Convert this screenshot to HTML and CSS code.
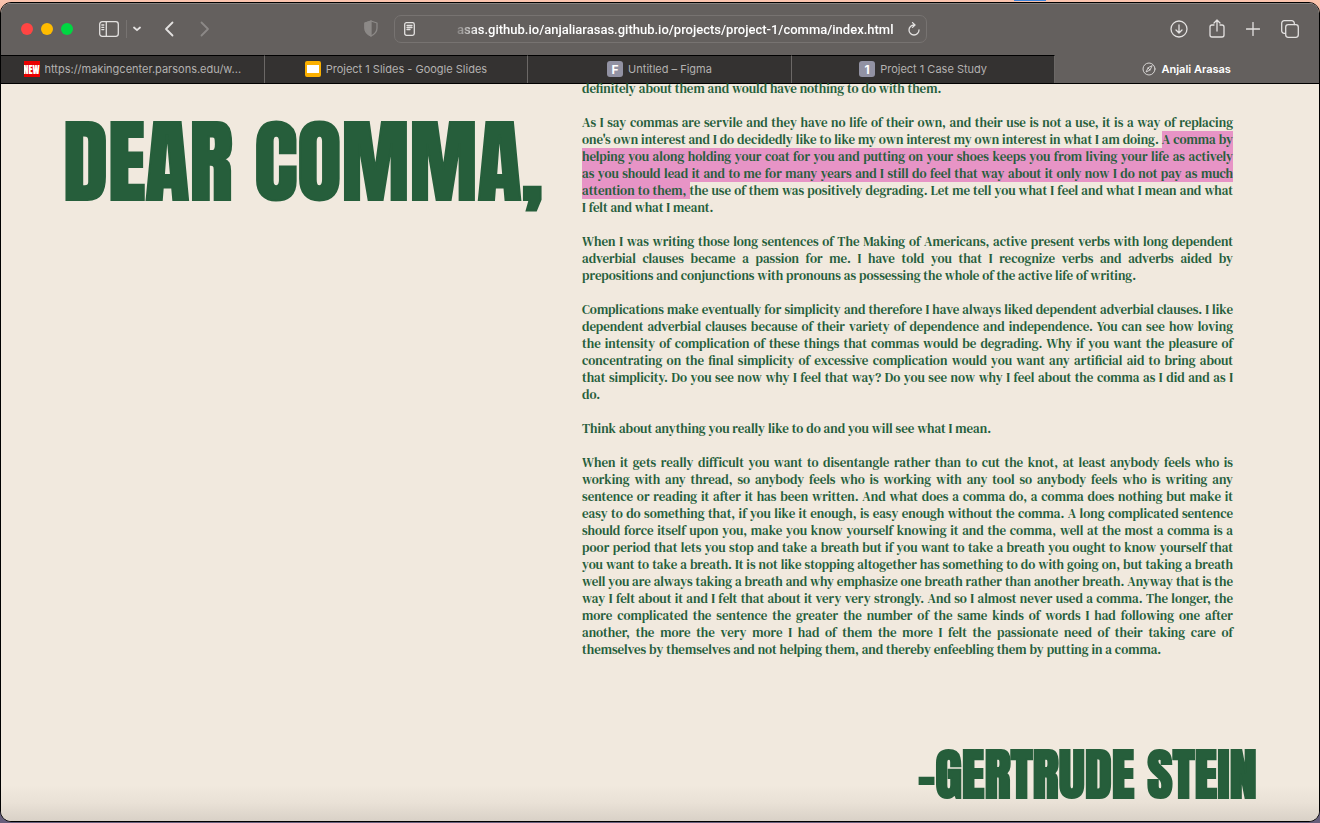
FILE: index.html
```html
<!DOCTYPE html>
<html lang="en">
<head>
<meta charset="utf-8">
<title>Anjali Arasas</title>
<link rel="stylesheet" href="styles.css">
</head>
<body>
<div class="window">
  <header class="toolbar">
    <div class="group left">
      <div class="lights"><button class="light red" aria-label="Close"></button><button class="light yellow" aria-label="Minimize"></button><button class="light green" aria-label="Full screen"></button></div>
      <button class="icon sidebar" aria-label="Sidebar"><svg width="20" height="16" viewBox="0 0 20 16"><rect x=".7" y=".7" width="18.6" height="14.6" rx="2.5"/><path d="M7.3 1v14M2.8 4h2M2.8 6.3h2M2.8 8.6h2"/></svg></button>
      <button class="icon chevron" aria-label="Tab groups"><svg width="8" height="6" viewBox="0 0 8 6"><path class="thick" d="M1 1.5l3 2.7 3-2.7"/></svg></button>
      <button class="icon back" aria-label="Back"><svg width="10" height="16" viewBox="0 0 10 16"><path class="thick" d="M8.5 1.5L2 8l6.5 6.5"/></svg></button>
      <button class="icon forward dim" aria-label="Forward" disabled><svg width="10" height="16" viewBox="0 0 10 16"><path class="thick" d="M1.5 1.5L8 8l-6.5 6.5"/></svg></button>
    </div>
    <div class="group center">
      <button class="icon shield dim" aria-label="Privacy report"><svg width="14" height="17" viewBox="0 0 14 17"><path d="M7 1l6 2v5c0 4-3 6.5-6 8-3-1.5-6-4-6-8V3z"/><path class="fill" d="M7 1L1 3v5c0 4 3 6.5 6 8z"/></svg></button>
      <div class="address">
        <button class="icon reader" aria-label="Reader"><svg width="11" height="14" viewBox="0 0 11 14"><rect x=".7" y=".7" width="9.6" height="12.6" rx="1.8"/><path d="M3 3.5h5M3 5.5h5M3 7.5h3"/></svg></button>
        <input class="url" aria-label="Address" value="asas.github.io/anjaliarasas.github.io/projects/project-1/comma/index.html">
        <button class="icon reload" aria-label="Reload"><svg width="12" height="14" viewBox="0 0 12 14"><path d="M6.5 3H6a5 5 0 1 0 5 5M4.5.6L7 3 4.5 5.4"/></svg></button>
      </div>
    </div>
    <div class="group right">
      <button class="icon" aria-label="Downloads"><svg width="18" height="18" viewBox="0 0 18 18"><circle cx="9" cy="9" r="8"/><path d="M9 5v8M6 10l3 3 3-3"/></svg></button>
      <button class="icon share" aria-label="Share"><svg width="16" height="20" viewBox="0 0 16 20"><path d="M5 6H3a2 2 0 0 0-2 2v8a2 2 0 0 0 2 2h10a2 2 0 0 0 2-2V8a2 2 0 0 0-2-2h-2M8 12V1M5 4l3-3 3 3"/></svg></button>
      <button class="icon" aria-label="New tab"><svg width="14" height="14" viewBox="0 0 14 14"><path d="M7 .5v13M.5 7h13"/></svg></button>
      <button class="icon" aria-label="Tab overview"><svg width="18" height="18" viewBox="0 0 18 18"><rect x="4.7" y="4.7" width="12.6" height="12.6" rx="2.5"/><path d="M4.5 13.3H3.2A2.5 2.5 0 0 1 .7 10.8V3.2A2.5 2.5 0 0 1 3.2.7h7.6a2.5 2.5 0 0 1 2.5 2.5v1.3"/></svg></button>
    </div>
  </header>
  <nav class="tabs">
    <a class="tab" href="#"><span class="fav new">NEW</span>https://makingcenter.parsons.edu/w...</a>
    <a class="tab" href="#"><span class="fav slides"></span>Project 1 Slides - Google Slides</a>
    <a class="tab" href="#"><span class="fav letter">F</span>Untitled – Figma</a>
    <a class="tab" href="#"><span class="fav letter">1</span>Project 1 Case Study</a>
    <a class="tab active" href="#"><svg width="14" height="14" viewBox="0 0 14 14"><circle cx="7" cy="7" r="6"/><path d="M10 4L8 8l-4 2 2-4zM6 6l2 2"/></svg>Anjali Arasas</a>
  </nav>
  <main class="page">
    <div class="columns">
      <h1 class="title">DEAR COMMA,</h1>
      <article class="essay">
        <p>definitely about them and would have nothing to do with them.</p>
        <p>As I say commas are servile and they have no life of their own, and their use is not a use, it is a way of replacing one's own interest and I do decidedly like to like my own interest my own interest in what I am doing. <mark>A comma by helping you along holding your coat for you and putting on your shoes keeps you from living your life as actively as you should lead it and to me for many years and I still do feel that way about it only now I do not pay as much attention to them, </mark>the use of them was positively degrading. Let me tell you what I feel and what I mean and what I felt and what I meant.</p>
        <p>When I was writing those long sentences of The Making of Americans, active present verbs with long dependent adverbial clauses became a passion for me. I have told you that I recognize verbs and adverbs aided by prepositions and conjunctions with pronouns as possessing the whole of the active life of writing.</p>
        <p>Complications make eventually for simplicity and therefore I have always liked dependent adverbial clauses. I like dependent adverbial clauses because of their variety of dependence and independence. You can see how loving the intensity of complication of these things that commas would be degrading. Why if you want the pleasure of concentrating on the final simplicity of excessive complication would you want any artificial aid to bring about that simplicity. Do you see now why I feel that way? Do you see now why I feel about the comma as I did and as I do.</p>
        <p>Think about anything you really like to do and you will see what I mean.</p>
        <p>When it gets really difficult you want to disentangle rather than to cut the knot, at least anybody feels who is working with any thread, so anybody feels who is working with any tool so anybody feels who is writing any sentence or reading it after it has been written. And what does a comma do, a comma does nothing but make it easy to do something that, if you like it enough, is easy enough without the comma. A long complicated sentence should force itself upon you, make you know yourself knowing it and the comma, well at the most a comma is a poor period that lets you stop and take a breath but if you want to take a breath you ought to know yourself that you want to take a breath. It is not like stopping altogether has something to do with going on, but taking a breath well you are always taking a breath and why emphasize one breath rather than another breath. Anyway that is the way I felt about it and I felt that about it very very strongly. And so I almost never used a comma. The longer, the more complicated the sentence the greater the number of the same kinds of words I had following one after another, the more the very more I had of them the more I felt the passionate need of their taking care of themselves by themselves and not helping them, and thereby enfeebling them by putting in a comma.</p>
      </article>
    </div>
    <h2 class="signature">-GERTRUDE STEIN</h2>
  </main>
</div>
</body>
</html>
```
FILE: styles.css
```css
* { box-sizing: border-box; }
body {
  margin: 0;
  height: 100vh;
  padding: 2px 0 1px;
  display: flex;
  background: linear-gradient(90deg, transparent 1014px, #3d82d8 1014px, #3d82d8 1046px, transparent 1046px) 0 0 / 100% 1px no-repeat,
    linear-gradient(#fbc4ae 0, #f6bda8 12px, #3b303f 60px, #67607c 100%);
  font-family: Inter, "Liberation Sans", sans-serif;
}
.window {
  flex: 1;
  min-width: 0;
  display: flex;
  flex-direction: column;
  border: 1px solid #000;
  border-radius: 11px;
  overflow: hidden;
  background: #f1e9de;
}
button { border: 0; padding: 0; background: none; }
svg { display: block; fill: none; stroke: currentColor; stroke-width: 1.3; stroke-linecap: round; stroke-linejoin: round; }
.thick { stroke-width: 1.8; }
.fill { fill: currentColor; }
.toolbar {
  height: 52px;
  flex: none;
  display: grid;
  grid-template-columns: 1fr auto 1fr;
  align-items: center;
  padding: 0 20px 2px;
  background: #64605e;
  border-top: 1px solid #85817f;
}
.group { display: flex; align-items: center; }
.lights { display: flex; gap: 8px; margin-right: 26px; }
.light { width: 12px; height: 12px; border-radius: 50%; }
.red { background: #ff4543; }
.yellow { background: #ffbc00; }
.green { background: #00d742; }
.icon { color: #e3e1e0; }
.dim { color: #8c8987; }
.chevron { border-left: 1px solid #777371; margin-left: 7px; padding: 6px 0 6px 6px; }
.back { margin-left: 23px; }
.forward { margin-left: 26px; }
.center { margin-right: 30px; }
.shield { margin-right: 16px; }
.address {
  width: 533px;
  height: 28px;
  display: flex;
  align-items: center;
  padding: 0 6px 0 9px;
  border: 1px solid #777371;
  border-radius: 7px;
}
.reader { margin-right: 36px; }
.url {
  flex: 1;
  min-width: 0;
  height: 24px;
  border: 0;
  background: none;
  padding: 2px 14px 0 0;
  color: #fff;
  font: 500 13px Roboto, Inter, "Liberation Sans", sans-serif;
  text-align: right;
  -webkit-mask-image: linear-gradient(90deg, transparent, #000 28px);
  mask-image: linear-gradient(90deg, transparent, #000 28px);
}
.right { justify-content: flex-end; gap: 21px; }
.tabs {
  height: 29px;
  flex: none;
  display: grid;
  grid-template-columns: repeat(5, 1fr);
  border-bottom: 1px solid #000;
  background: #343231;
}
.tab {
  display: flex;
  align-items: center;
  justify-content: center;
  gap: 5px;
  padding-bottom: 1px;
  border-top: 1px solid #000;
  border-right: 1px solid #6b6866;
  color: #b3b1b0;
  font-size: 11px;
  text-decoration: none;
  white-space: nowrap;
}
.active { background: #64605e; border-color: #64605e; color: #fff; font-weight: 600; }
.active svg { stroke-width: 1; color: #d5d3d2; }
.fav { width: 16px; height: 16px; display: flex; align-items: center; justify-content: center; overflow: hidden; flex: none; }
.new { background: #e80000; color: #fff; font: 10px Anton, "Liberation Sans", sans-serif; }
.slides { border: solid #fbb000; border-width: 4px 2px; border-radius: 2px; background: #fff; }
.letter { border-radius: 3px; background: #9292a3; color: #fff; font-weight: 700; font-size: 12px; }
.page {
  flex: 1;
  min-height: 0;
  display: flex;
  flex-direction: column;
  justify-content: space-between;
  color: #265e3b;
  background: linear-gradient(#f1e9de calc(100% - 36px), #e9e1d6 calc(100% - 18px), #d9d1c7 100%);
}
.columns {
  display: grid;
  grid-template-columns: minmax(0, 519fr) minmax(0, 651fr);
  padding: 0 86px 0 62px;
}
.title, .signature {
  margin: 0;
  font-family: Anton, Impact, sans-serif;
  font-weight: 400;
  line-height: 1;
  white-space: nowrap;
  -webkit-text-stroke: 2px #265e3b;
}
.title { padding-top: 32px; font-size: 91px; }
.signature { padding: 0 62px 19px 0; text-align: right; font-size: 55px; }
.essay {
  margin-top: -4px;
  font: 400 13px/17px "DM Serif Text", "Liberation Serif", serif;
  text-align: justify;
}
.essay p { margin: 0 0 17px; }
mark {
  background: linear-gradient(#e794c6, #e794c6) 0 100% / 100% 17px no-repeat;
  -webkit-box-decoration-break: clone;
  box-decoration-break: clone;
  color: inherit;
}
```
